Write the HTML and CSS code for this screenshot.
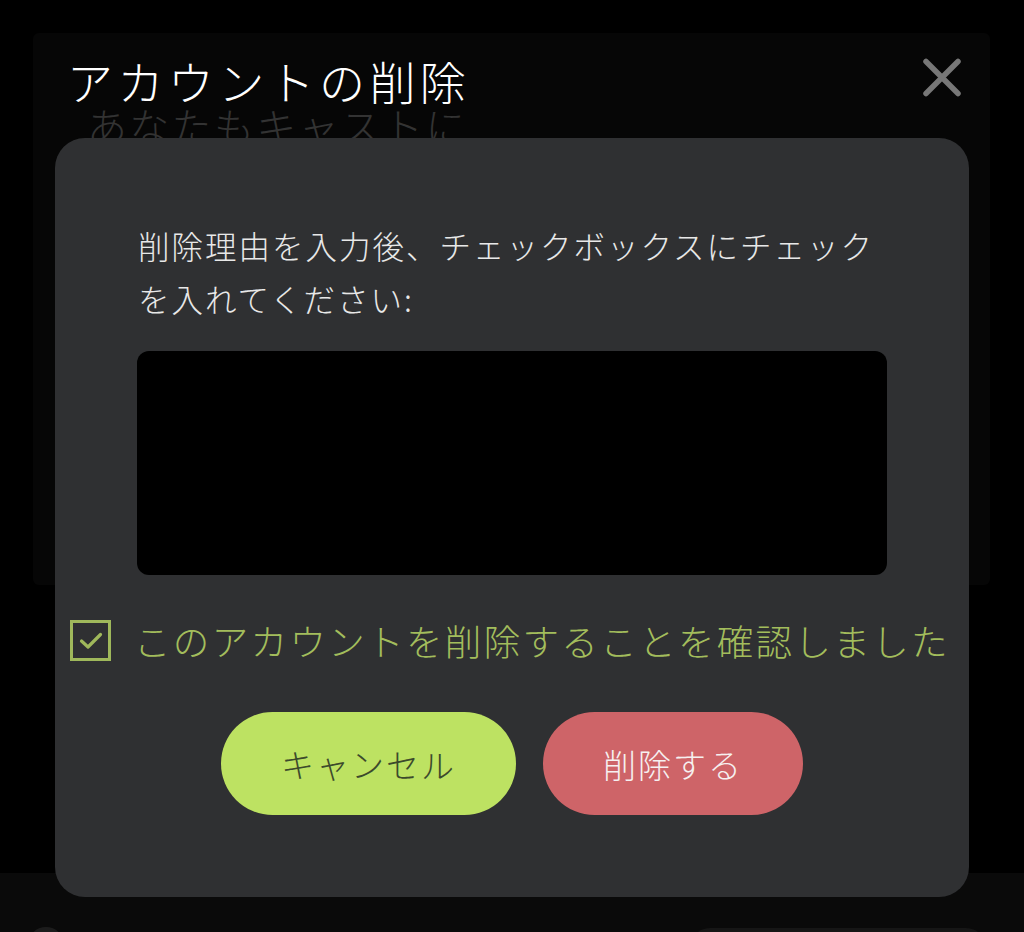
FILE: index.html
```html
<!DOCTYPE html>
<html lang="ja">
<head>
<meta charset="utf-8">
<title>アカウントの削除</title>
<link rel="stylesheet" href="styles.css">
</head>
<body>
<div class="screen">
  <section class="page-card">
    <div class="page-head">
      <h1 class="page-title">アカウントの削除</h1>
      <button class="close-btn" aria-label="閉じる">
        <svg width="38" height="39" viewBox="0 0 38 39"><path d="M3 3.5 L35 35.5 M35 3.5 L3 35.5" stroke="#777" stroke-width="5.5" stroke-linecap="round" fill="none"/></svg>
      </button>
    </div>
    <p class="ghost-text">あなたもキャストに</p>
  </section>
  <div class="bottom-bar">
    <span class="bar-dot"></span>
    <span class="bar-pill"></span>
  </div>

  <div class="modal">
    <p class="modal-text">削除理由を入力後、チェックボックスにチェックを入れてください:</p>
    <textarea class="reason"></textarea>
    <label class="confirm-row">
      <span class="checkbox">
        <svg width="24" height="18" viewBox="0 0 24 18"><path d="M2.5 9 L9 15 L21.5 2.5" stroke="#9fb85b" stroke-width="3.2" stroke-linecap="round" stroke-linejoin="round" fill="none"/></svg>
      </span>
      <span class="confirm-text">このアカウントを削除することを確認しました</span>
    </label>
    <div class="actions">
      <button class="btn btn-cancel">キャンセル</button>
      <button class="btn btn-delete">削除する</button>
    </div>
  </div>
</div>
</body>
</html>
```

FILE: styles.css
```css
* { box-sizing: border-box; }
html, body {
  margin: 0;
  padding: 0;
  background: #000;
}
body {
  width: 1024px;
  height: 932px;
  overflow: hidden;
  font-family: "Noto Sans CJK JP", "Noto Sans", sans-serif;
  font-weight: 300;
}
.screen {
  position: relative;
  width: 1024px;
  height: 932px;
  padding-top: 33px;
  display: flex;
  flex-direction: column;
}
.page-card {
  margin: 0 34px 0 33px;
  height: 552px;
  background: #060606;
  border-radius: 6px;
  padding: 0 0 0 34px;
}
.page-head {
  display: flex;
  justify-content: space-between;
  align-items: flex-start;
}
.page-title {
  margin: 16px 0 0 0;
  font-size: 46px;
  line-height: 62px;
  font-weight: 300;
  letter-spacing: 4.4px;
  color: #fff;
}
.close-btn {
  margin: 25px 29px 0 0;
  padding: 0;
  border: 0;
  background: none;
  width: 38px;
  height: 39px;
  display: flex;
}
.ghost-text {
  margin: -14px 0 0 20px;
  font-size: 40px;
  line-height: 56px;
  letter-spacing: 2.3px;
  color: #333;
}
.bottom-bar {
  margin-top: auto;
  height: 59px;
  background: #0a0a0a;
  position: relative;
}
.bar-dot {
  position: absolute;
  left: 28px;
  top: 54px;
  width: 36px;
  height: 36px;
  border-radius: 50%;
  background: #1c1c1c;
}
.bar-pill {
  position: absolute;
  left: 690px;
  top: 55px;
  width: 296px;
  height: 40px;
  border-radius: 20px;
  background: #161616;
}
.modal {
  position: absolute;
  left: 55px;
  top: 138px;
  width: 914px;
  height: 759px;
  background: #2f3032;
  border-radius: 30px;
  padding-top: 81px;
  display: flex;
  flex-direction: column;
}
.modal-text {
  margin: 0 80px 0 83px;
  font-size: 31.5px;
  line-height: 53px;
  letter-spacing: 2px;
  color: #e8e8e8;
}
.reason {
  margin: 26px 82px 0 82px;
  height: 224px;
  background: #000;
  border: 0;
  border-radius: 12px;
  resize: none;
  outline: none;
  color: #fff;
}
.confirm-row {
  margin: 45px 0 0 15px;
  display: flex;
  align-items: center;
  gap: 23px;
  height: 41px;
}
.checkbox {
  width: 41px;
  height: 41px;
  border: 3px solid #9fb85b;
  display: flex;
  align-items: center;
  justify-content: center;
  flex: none;
}
.checkbox svg { margin-top: 1px; }
.confirm-text {
  font-size: 36.5px;
  line-height: 41px;
  letter-spacing: 2.35px;
  color: #a3bd5c;
  white-space: nowrap;
}
.actions {
  margin-top: 51px;
  display: flex;
  justify-content: center;
  gap: 27px;
}
.btn {
  height: 103px;
  border: 0;
  border-radius: 52px;
  font-family: inherit;
  font-weight: 300;
  font-size: 33px;
  letter-spacing: 2px;
  padding: 0;
}
.btn-cancel {
  width: 295px;
  background: #bde262;
  color: #3c4a2c;
}
.btn-delete {
  width: 260px;
  background: #ce6468;
  color: #f6f0f0;
}
```
